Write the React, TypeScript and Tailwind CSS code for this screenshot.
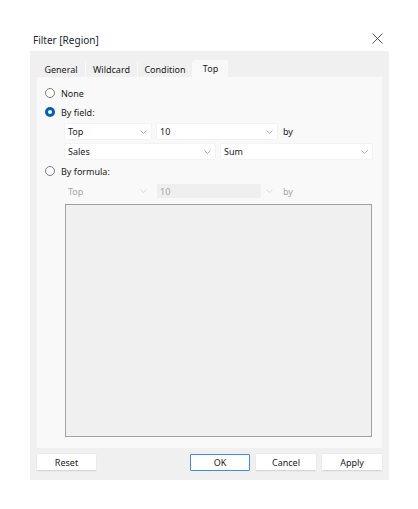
import React from "react";

const font = { fontFamily: '"Noto Sans", "Open Sans", Arial, sans-serif' };

function Chevron({ disabled }: { disabled?: boolean }) {
  return (
    <svg width="7" height="4" viewBox="0 0 7 4" className="shrink-0">
      <path
        d="M0.5 0.5 L3.5 3.5 L6.5 0.5"
        fill="none"
        stroke={disabled ? "#d2d2d2" : "#9a9a9a"}
        strokeWidth="0.8"
      />
    </svg>
  );
}

function Select({
  value,
  width,
  disabled,
  shaded,
}: {
  value: string;
  width: string;
  disabled?: boolean;
  shaded?: boolean;
}) {
  return (
    <div
      className={`flex h-full items-center rounded-[1px] ${width} ${
        disabled ? "bg-[#f9f9f9]" : "bg-white shadow-[0_0_0_0.5px_#ececec]"
      }`}
    >
      <div
        className={`flex h-full flex-1 items-center pl-[3px] ${
          shaded ? "bg-[#efefef]" : ""
        } ${disabled ? "text-[#a6a6a6]" : "text-[#1a1a1a]"}`}
      >
        {value}
      </div>
      <div className="flex w-[16px] items-center justify-center">
        <Chevron disabled={disabled} />
      </div>
    </div>
  );
}

function Radio({ checked, label }: { checked?: boolean; label: string }) {
  return (
    <div className="flex h-[12px] items-center gap-[6px]">
      {checked ? (
        <span className="flex h-[10px] w-[10px] items-center justify-center rounded-full bg-[#005fb8]">
          <span className="h-[4px] w-[4px] rounded-full bg-white" />
        </span>
      ) : (
        <span className="h-[10px] w-[10px] rounded-full border border-[#7a7a7a] bg-white" />
      )}
      <span className="text-[#1a1a1a]">{label}</span>
    </div>
  );
}

function Button({ label, primary }: { label: string; primary?: boolean }) {
  return (
    <div
      className={`flex h-[17px] w-[60px] items-center justify-center rounded-[1px] bg-white text-[#1a1a1a] ${
        primary
          ? "border border-[#3d8ee0]"
          : "border-b border-[#d6d6d6] shadow-[0_0_0_0.5px_#e4e4e4]"
      }`}
    >
      {label}
    </div>
  );
}

export default function App() {
  const tabs = [
    { name: "General", w: "w-[49px]" },
    { name: "Wildcard", w: "w-[52px]" },
    { name: "Condition", w: "w-[55px]" },
  ];
  return (
    <div className="h-[509px] w-[418px] bg-white text-[9px] leading-none" style={font}>
      {/* title bar */}
      <div className="flex h-[51px] items-end justify-between pb-[6px] pl-[33px] pr-[35px]">
        <span className="text-[10px] text-[#1b2535]">Filter [Region]</span>
        <svg width="11" height="11" viewBox="0 0 11 11" className="mb-[1px]">
          <path d="M0.5 0.5 L10.5 10.5 M10.5 0.5 L0.5 10.5" stroke="#444" strokeWidth="0.9" />
        </svg>
      </div>

      {/* dialog body */}
      <div className="ml-[30px] flex h-[429px] w-[359px] flex-col bg-[#f0f0f0] px-[7px] pt-[9px]">
        {/* tabs */}
        <div className="flex h-[17px] items-end">
          {tabs.map((t) => (
            <div
              key={t.name}
              className={`flex h-[15px] ${t.w} items-center justify-center border-r border-[#fafafa] bg-[#f0f0f0] text-[#1a1a1a]`}
            >
              {t.name}
            </div>
          ))}
          <div className="flex h-[17px] w-[35px] items-center justify-center bg-[#f9f9f9] text-[#1a1a1a]">
            Top
          </div>
        </div>

        {/* tab content */}
        <div className="flex h-[371px] w-[345px] flex-col bg-[#f9f9f9] pl-[8px] pt-[10px]">
          <Radio label="None" />
          <div className="mt-[7px]">
            <Radio checked label="By field:" />
          </div>
          <div className="ml-[20px] mt-[6px] flex h-[15px] items-center gap-[6px]">
            <Select value="Top" width="w-[86px]" />
            <Select value="10" width="w-[120px]" />
            <span className="text-[#1a1a1a]">by</span>
          </div>
          <div className="ml-[20px] mt-[5px] flex h-[15px] items-center gap-[6px]">
            <Select value="Sales" width="w-[150px]" />
            <Select value="Sum" width="w-[151px]" />
          </div>
          <div className="mt-[6px]">
            <Radio label="By formula:" />
          </div>
          <div className="ml-[20px] mt-[7px] flex h-[14px] items-center gap-[6px]">
            <Select value="Top" width="w-[86px]" disabled />
            <Select value="10" width="w-[120px]" disabled shaded />
            <span className="text-[#a6a6a6]">by</span>
          </div>
          <div className="ml-[20px] mt-[6px] h-[233px] w-[307px] border border-[#a0a0a0] bg-[#f0f0f0]" />
        </div>

        {/* buttons */}
        <div className="mt-[6px] flex items-center">
          <Button label="Reset" />
          <div className="ml-[94px] flex gap-[6px]">
            <Button label="OK" primary />
            <Button label="Cancel" />
            <Button label="Apply" />
          </div>
        </div>
      </div>
    </div>
  );
}
